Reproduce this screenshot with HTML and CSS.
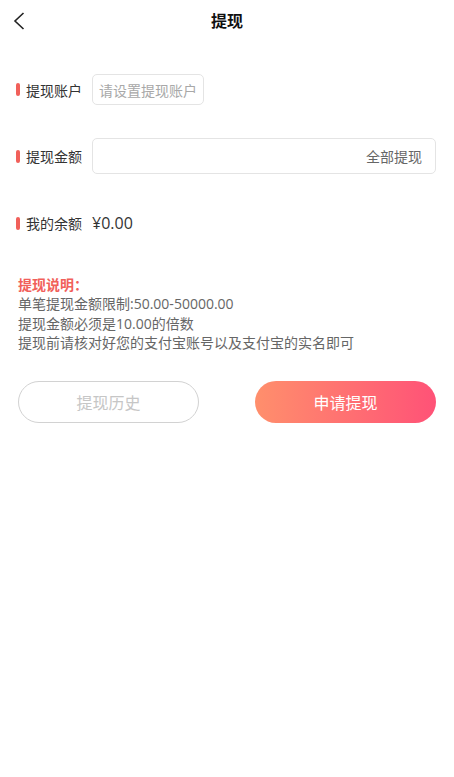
FILE: index.html
```html
<!DOCTYPE html>
<html lang="zh">
<head>
<meta charset="utf-8">
<title>提现</title>
<link rel="stylesheet" href="styles.css">
</head>
<body>
<header class="topbar">
  <span class="back">
    <svg width="12" height="18" viewBox="0 0 12 18"><path d="M10.5 1 L2 9 L10.5 17" fill="none" stroke="#222" stroke-width="1.6"/></svg>
  </span>
  <h1 class="title">提现</h1>
</header>
<main class="content">
  <div class="row row-account">
    <div class="label"><i class="mark"></i>提现账户</div>
    <div class="box box-account">请设置提现账户</div>
  </div>
  <div class="row row-amount">
    <div class="label"><i class="mark"></i>提现金额</div>
    <div class="box box-amount"><span class="all">全部提现</span></div>
  </div>
  <div class="row row-balance">
    <div class="label"><i class="mark"></i>我的余额</div>
    <div class="balance">¥0.00</div>
  </div>
  <div class="notes">
    <p class="notes-title">提现说明：</p>
    <p>单笔提现金额限制:50.00-50000.00</p>
    <p>提现金额必须是10.00的倍数</p>
    <p>提现前请核对好您的支付宝账号以及支付宝的实名即可</p>
  </div>
  <div class="actions">
    <button class="btn btn-history">提现历史</button>
    <button class="btn btn-apply">申请提现</button>
  </div>
</main>
</body>
</html>
```
FILE: styles.css
```css
* { box-sizing: border-box; }
html, body { margin: 0; padding: 0; background: #fff; }
body {
  font-family: "Open Sans", "Noto Sans CJK SC", sans-serif;
  color: #333;
  width: 454px;
}
.topbar {
  height: 42px;
  display: flex;
  align-items: center;
  justify-content: center;
  position: relative;
}
.back {
  position: absolute;
  left: 13px;
  top: 12px;
  display: flex;
}
.title {
  margin: 0;
  font-size: 16px;
  font-weight: bold;
  color: #111;
  line-height: 42px;
}
.content {
  padding: 0 18px 0 16px;
}
.row {
  display: flex;
  align-items: center;
}
.row-account { margin-top: 32px; height: 31px; }
.row-amount { margin-top: 33px; height: 36px; }
.row-balance { margin-top: 37px; height: 24px; }
.label {
  width: 76px;
  flex-shrink: 0;
  display: flex;
  align-items: center;
  font-size: 14px;
  color: #333;
  white-space: nowrap;
}
.mark {
  width: 4px;
  height: 13px;
  border-radius: 2px;
  background: #f1605a;
  margin-right: 6px;
}
.box {
  height: 100%;
  border: 1px solid #e4e4e4;
  border-radius: 5px;
  display: flex;
  align-items: center;
  font-size: 14px;
}
.box-account {
  width: 112px;
  padding-left: 6px;
  color: #a8a8a8;
  white-space: nowrap;
  overflow: hidden;
}
.box-amount {
  flex: 1;
  justify-content: flex-end;
  padding-right: 13px;
  color: #666;
}
.balance {
  font-size: 16px;
  color: #333;
}
.notes {
  margin-top: 40px;
  padding-left: 2px;
  font-size: 14px;
  line-height: 19.4px;
  color: #666;
}
.notes p { margin: 0; }
.notes-title {
  color: #f1605a;
  font-weight: bold;
}
.actions {
  margin-top: 28px;
  padding-left: 2px;
  display: flex;
  justify-content: space-between;
}
.btn {
  width: 181px;
  height: 42px;
  border-radius: 21px;
  font-family: inherit;
  font-size: 16px;
  padding: 0;
}
.btn-history {
  background: #fff;
  border: 1px solid #d2d2d2;
  color: #c6c6c6;
}
.btn-apply {
  border: none;
  color: #fff;
  background: linear-gradient(to right, #ff8f6c, #ff5277);
}
```
